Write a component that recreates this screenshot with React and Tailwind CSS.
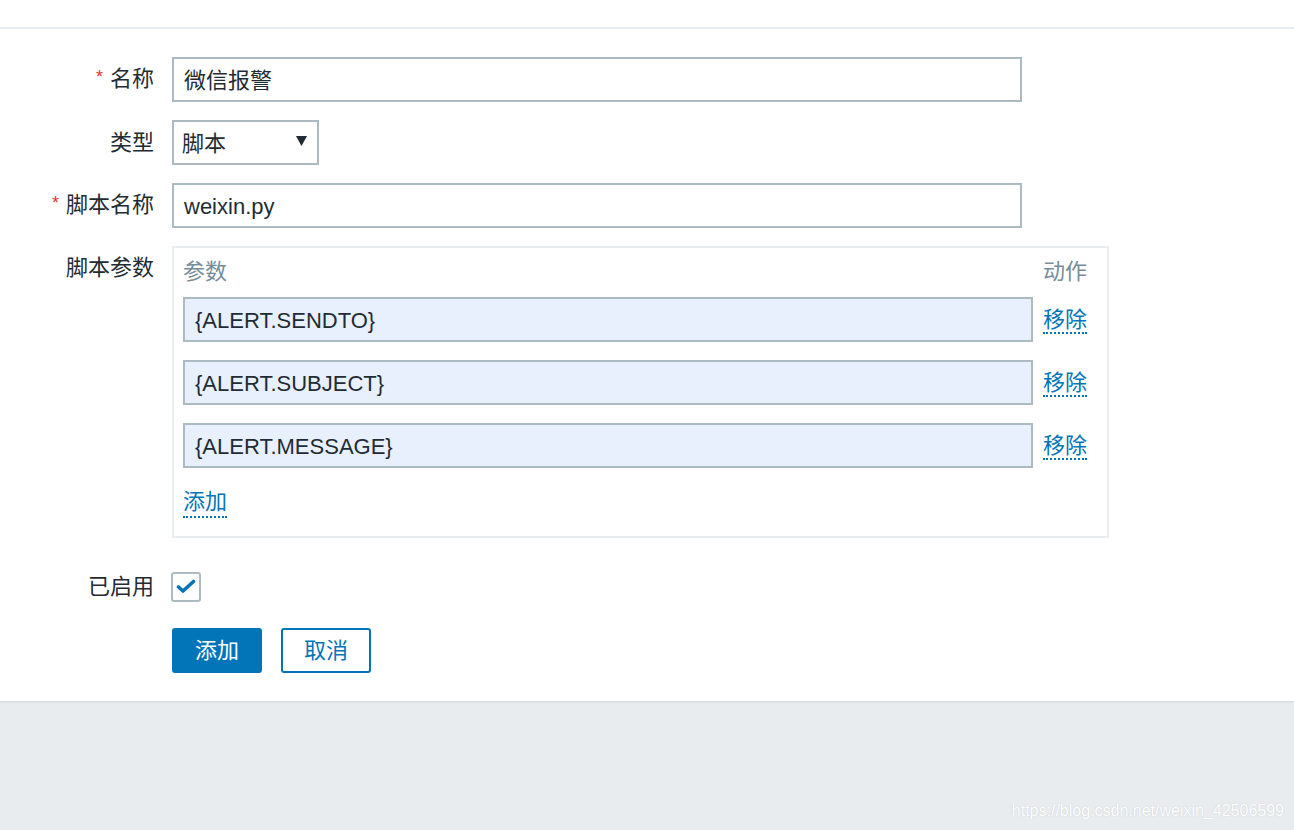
import React from "react";

const font = { fontFamily: '"Liberation Sans", Arial, "Noto Sans CJK SC", sans-serif' };

function Label({ children, required, className = "" }) {
  return (
    <div className={`w-[154px] shrink-0 text-right text-[22px] text-[#1f2c33] leading-[30px] ${className}`}>
      {required && <span className="text-[#e33734] text-[18px] mr-[7px] relative top-[-3px]">*</span>}
      {children}
    </div>
  );
}

function TextInput({ value, width = "w-[850px]", bg = "bg-white" }) {
  return (
    <div
      className={`${width} h-[45px] border-2 border-[#acbbc2] ${bg} flex items-center pl-[10px] pt-[2px] text-[22px] text-[#1f2c33]`}
    >
      {value}
    </div>
  );
}

function LinkText({ children }) {
  return (
    <span className="text-[22px] text-[#0275b8] leading-[28px] border-b-2 border-dotted border-[#0275b8]">
      {children}
    </span>
  );
}

export default function App() {
  const params = ["{ALERT.SENDTO}", "{ALERT.SUBJECT}", "{ALERT.MESSAGE}"];
  return (
    <div className="w-[1294px] h-[830px] flex flex-col bg-[#e9ecef]" style={font}>
      <div className="h-[27px] bg-white shrink-0" />
      <div className="h-[2px] bg-[#e9ecef] shrink-0" />
      <div className="bg-white pt-[28px] pb-[28px] border-b-2 border-[#dde2e6] flex flex-col shrink-0">
        {/* 名称 */}
        <div className="flex items-center">
          <Label required>名称</Label>
          <div className="ml-[18px]">
            <TextInput value="微信报警" />
          </div>
        </div>
        {/* 类型 */}
        <div className="flex items-center mt-[18px]">
          <Label>类型</Label>
          <div className="ml-[18px] w-[147px] h-[45px] border-2 border-[#acbbc2] bg-white flex items-center justify-between pl-[8px] pr-[10px] pt-[2px] text-[22px] text-[#1f2c33]">
            <span>脚本</span>
            <svg width="11" height="10" viewBox="0 0 11 10" className="mb-[6px]">
              <polygon points="0,0 11,0 5.5,10" fill="#1f2c33" />
            </svg>
          </div>
        </div>
        {/* 脚本名称 */}
        <div className="flex items-center mt-[18px]">
          <Label required>脚本名称</Label>
          <div className="ml-[18px]">
            <TextInput value="weixin.py" />
          </div>
        </div>
        {/* 脚本参数 */}
        <div className="flex items-start mt-[18px]">
          <Label className="pt-[7px]">脚本参数</Label>
          <div className="ml-[18px] w-[937px] border-2 border-[#ebeef0] pl-[9px] pr-[20px] pt-[5px] pb-[17px]">
            <div className="flex items-center h-[34px] pt-[2px] text-[22px] text-[#768d99]">
              <div className="w-[850px]">参数</div>
              <div className="ml-[10px]">动作</div>
            </div>
            <div className="flex flex-col gap-[18px] mt-[10px]">
              {params.map((p) => (
                <div key={p} className="flex items-center">
                  <TextInput value={p} bg="bg-[#e8f0fe]" />
                  <div className="ml-[10px] pt-[1px]">
                    <LinkText>移除</LinkText>
                  </div>
                </div>
              ))}
            </div>
            <div className="mt-[19px] h-[32px] flex items-center">
              <LinkText>添加</LinkText>
            </div>
          </div>
        </div>
        {/* 已启用 */}
        <div className="flex items-center mt-[33px]">
          <Label className="pt-[1px]">已启用</Label>
          <div className="ml-[17px] w-[30px] h-[30px] border-2 border-[#acbbc2] rounded-[3px] bg-white flex items-center justify-center">
            <svg width="20" height="15" viewBox="0 0 20 15">
              <polyline
                points="2.5,8 7,12 17.5,2.5"
                fill="none"
                stroke="#0275b8"
                strokeWidth="3.6"
                strokeLinecap="round"
                strokeLinejoin="round"
              />
            </svg>
          </div>
        </div>
        {/* buttons */}
        <div className="flex items-center mt-[26px] ml-[172px] gap-[19px]">
          <button className="w-[90px] h-[45px] rounded-[3px] bg-[#0275b8] text-white text-[22px] flex items-center justify-center">
            添加
          </button>
          <button className="w-[90px] h-[45px] rounded-[3px] bg-white border-2 border-[#0275b8] text-[#0275b8] text-[22px] flex items-center justify-center">
            取消
          </button>
        </div>
      </div>
      <div className="flex-1 flex items-end justify-end pr-[10px] pb-[9px]">
        <span
          className="text-[16px] text-white leading-[20px]"
          style={{ textShadow: "0 0 1px rgba(150,160,170,0.6)" }}
        >
          https://blog.csdn.net/weixin_42506599
        </span>
      </div>
    </div>
  );
}
